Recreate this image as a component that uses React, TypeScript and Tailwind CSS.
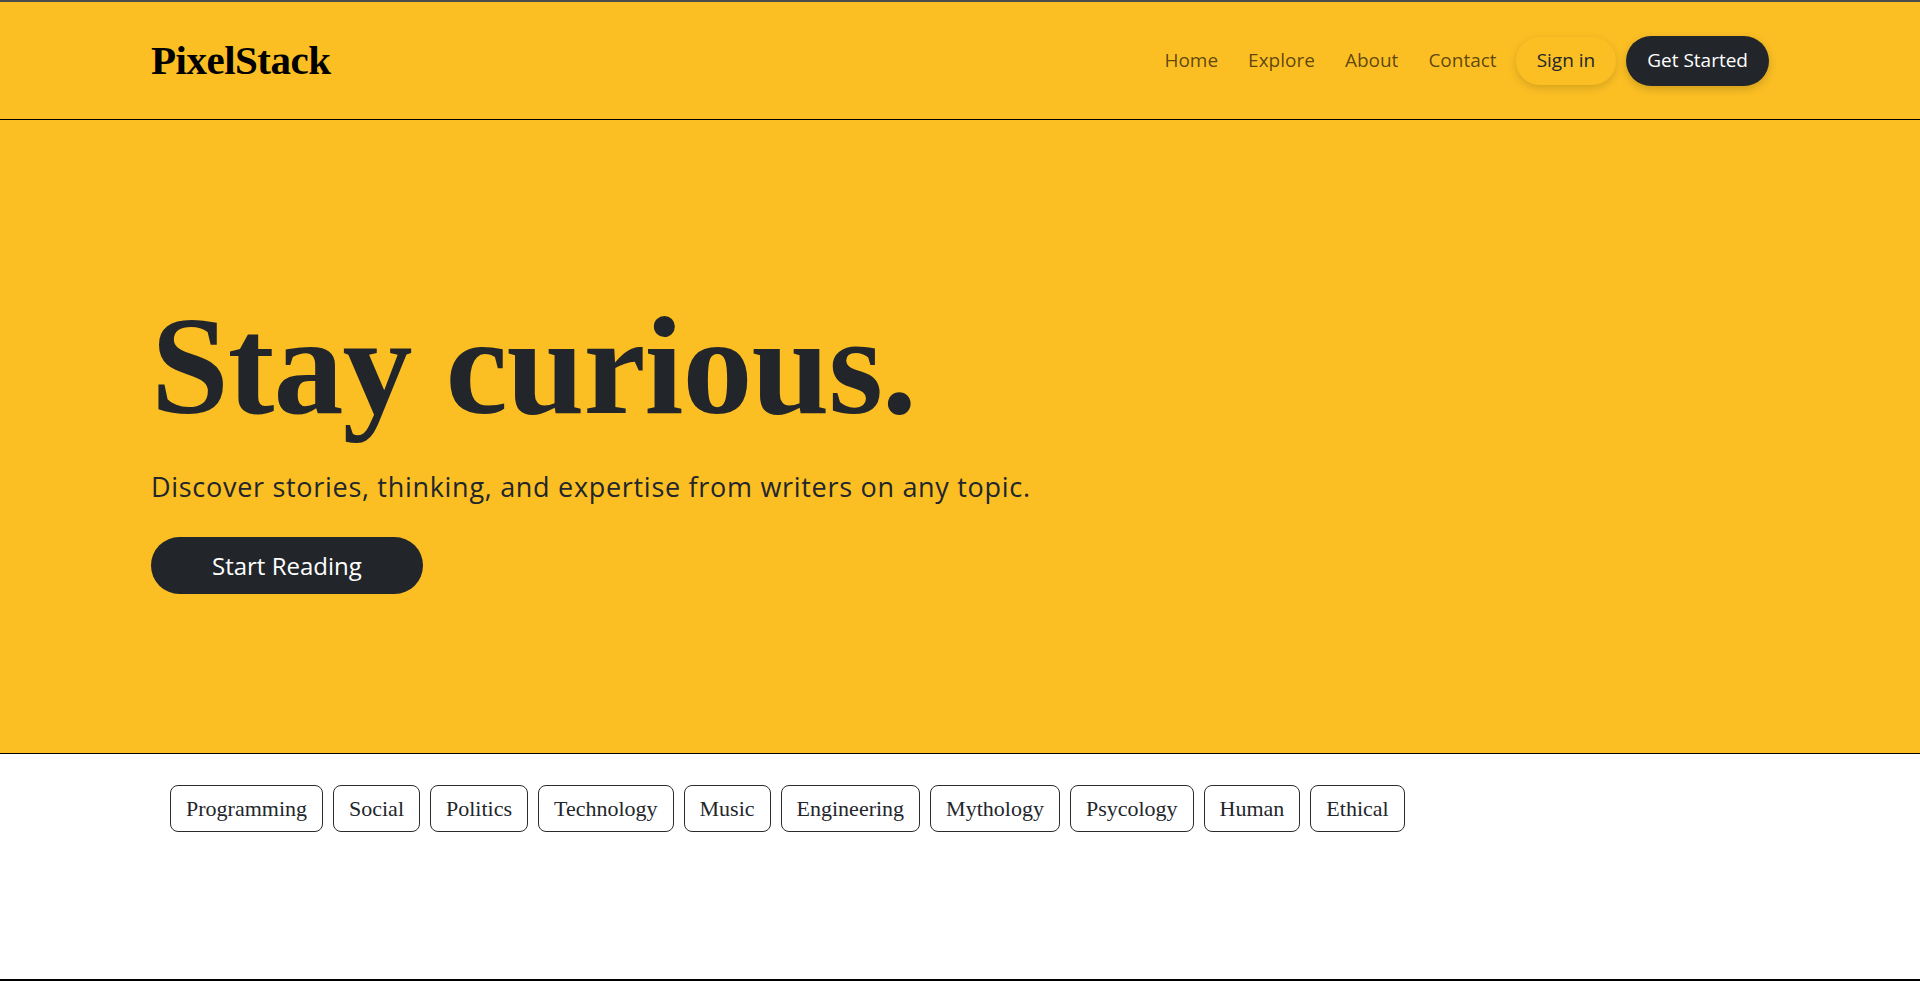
import React from 'react';

const navLinks = ['Home', 'Explore', 'About', 'Contact'];

const topics = [
    'Programming',
    'Social',
    'Politics',
    'Technology',
    'Music',
    'Engineering',
    'Mythology',
    'Psycology',
    'Human',
    'Ethical',
];

const serif = "font-['Liberation_Serif','Times_New_Roman',serif]";
const sans = "font-['Open_Sans','Liberation_Sans',sans-serif]";

function Header() {
    return (
        <header className="h-[120px] border-t-2 border-b border-t-[#4b4b4b] border-b-black bg-[#fbbf24]">
            <div className="mx-auto flex h-full max-w-[1618px] items-center justify-between">
                <a href="#" className={`${serif} text-[41px] leading-none font-bold tracking-[-0.5px] text-black`}>
                    PixelStack
                </a>
                <nav className={`${sans} flex items-center text-[19px]`}>
                    {navLinks.map((link, idx) => (
                        <a
                            key={link}
                            href="#"
                            className={`text-black/65 ${idx === navLinks.length - 1 ? 'mr-[19px]' : 'mr-[30px]'}`}
                        >
                            {link}
                        </a>
                    ))}
                    <button className="h-[48px] rounded-full bg-[#fbbf24] px-[21px] text-[#22262b] shadow-[0_3px_8px_rgba(0,0,0,0.15)]">
                        Sign in
                    </button>
                    <button className="ml-[10px] h-[50px] rounded-full bg-[#22262b] px-[21px] font-medium text-white shadow-[0_3px_8px_rgba(0,0,0,0.18)]">
                        Get Started
                    </button>
                </nav>
            </div>
        </header>
    );
}

function Hero() {
    return (
        <section className="border-b border-black bg-[#fbbf24]">
            <div className="mx-auto flex max-w-[1618px] flex-col items-start pt-[176px] pb-[159px]">
                <h1 className={`${serif} text-[140px] leading-none font-bold tracking-[-1px] text-[#22262b]`}>
                    Stay curious.
                </h1>
                <p className={`${sans} mt-[33px] text-[27px] leading-[36px] tracking-[0.7px] text-[#22262b]`}>
                    Discover stories, thinking, and expertise from writers on any topic.
                </p>
                <button className={`${sans} mt-[32px] flex h-[57px] items-center rounded-full bg-[#22262b] px-[61px] text-[24px] text-white`}>
                    Start Reading
                </button>
            </div>
        </section>
    );
}

function Topics() {
    return (
        <section className="h-[225px] bg-white">
            <div className="mx-auto flex max-w-[1618px] flex-wrap gap-[10px] pt-[31px] pl-[19px]">
                {topics.map((topic) => (
                    <span
                        key={topic}
                        className={`${serif} flex h-[47px] items-center rounded-lg border border-[#2b2b2b] px-[15px] text-[22px] text-[#22262b]`}
                    >
                        {topic}
                    </span>
                ))}
            </div>
        </section>
    );
}

export default function App() {
    return (
        <div className="min-h-screen bg-white">
            <Header />
            <Hero />
            <Topics />
            <div className="h-[40px] border-t-2 border-black bg-white" />
        </div>
    );
}
